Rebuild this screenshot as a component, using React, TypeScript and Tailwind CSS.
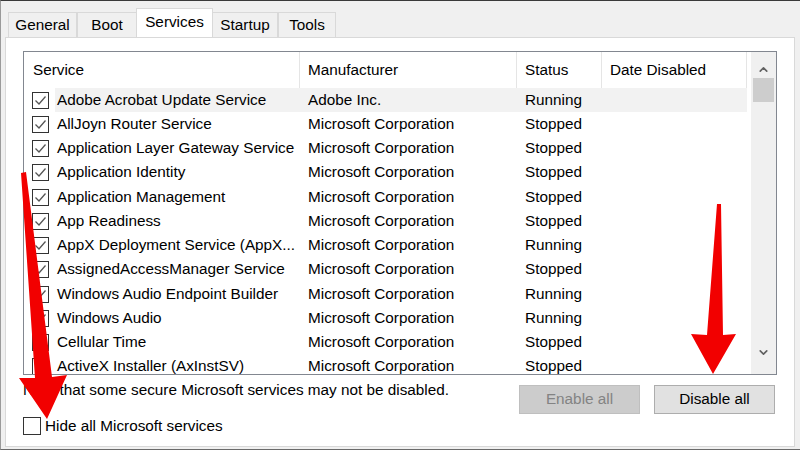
import { ChevronUp, ChevronDown } from 'lucide-react';

type Row = { name: string; maker: string; status: string };

const rows: Row[] = [
  { name: 'Adobe Acrobat Update Service', maker: 'Adobe Inc.', status: 'Running' },
  { name: 'AllJoyn Router Service', maker: 'Microsoft Corporation', status: 'Stopped' },
  { name: 'Application Layer Gateway Service', maker: 'Microsoft Corporation', status: 'Stopped' },
  { name: 'Application Identity', maker: 'Microsoft Corporation', status: 'Stopped' },
  { name: 'Application Management', maker: 'Microsoft Corporation', status: 'Stopped' },
  { name: 'App Readiness', maker: 'Microsoft Corporation', status: 'Stopped' },
  { name: 'AppX Deployment Service (AppX...', maker: 'Microsoft Corporation', status: 'Running' },
  { name: 'AssignedAccessManager Service', maker: 'Microsoft Corporation', status: 'Stopped' },
  { name: 'Windows Audio Endpoint Builder', maker: 'Microsoft Corporation', status: 'Running' },
  { name: 'Windows Audio', maker: 'Microsoft Corporation', status: 'Running' },
  { name: 'Cellular Time', maker: 'Microsoft Corporation', status: 'Stopped' },
  { name: 'ActiveX Installer (AxInstSV)', maker: 'Microsoft Corporation', status: 'Stopped' },
];

const tabs = [
  { label: 'General', w: 'w-[69px]' },
  { label: 'Boot', w: 'w-[60px]' },
  { label: 'Services', w: 'w-[77px]', active: true },
  { label: 'Startup', w: 'w-[66px]' },
  { label: 'Tools', w: 'w-[58px]' },
];

function CheckBox({ checked }: { checked: boolean }) {
  return (
    <div className="w-[17px] h-[17px] border border-[#333] bg-white flex items-center justify-center shrink-0">
      {checked && (
        <svg width="13" height="11" viewBox="0 0 13 11">
          <path d="M1.5 5.5 L5 9 L11.5 1.5" fill="none" stroke="#555" strokeWidth="1.3" />
        </svg>
      )}
    </div>
  );
}

function Arrows() {
  return (
    <svg className="absolute inset-0 pointer-events-none" width="800" height="450" viewBox="0 0 800 450">
      <defs>
        <filter id="soft" x="-20%" y="-20%" width="140%" height="140%">
          <feGaussianBlur stdDeviation="0.7" />
        </filter>
      </defs>
      <g fill="#f20000" filter="url(#soft)">
        <polygon points="20,172 25,171 51,376 66,374 46,418 18,377 34,377" />
        <polygon points="716,203 720,203 722,334 735,333 712,373 690,333 706,334" />
      </g>
    </svg>
  );
}

export default function App() {
  return (
    <div className="relative w-[800px] h-[450px] overflow-hidden bg-[#f0f0f0] border-t border-[#3a3a3a] border-l border-l-[#9a9a9a] border-b border-b-[#6a6a6a] text-[15.3px] text-black font-['Liberation_Sans',sans-serif]">
      <div className="flex items-end h-[36px] pl-[7px]">
        {tabs.map(t =>
          t.active ? (
            <div
              key={t.label}
              className={`${t.w} h-[29px] -mx-[1px] z-10 bg-white border border-b-0 border-[#d9d9d9] flex items-start justify-center pt-[2px]`}
            >
              {t.label}
            </div>
          ) : (
            <div
              key={t.label}
              className={`${t.w} h-[25px] bg-[#f0f0f0] border border-b-0 border-[#d9d9d9] flex items-center justify-center`}
            >
              {t.label}
            </div>
          )
        )}
      </div>

      <div className="ml-[4px] w-[790px] h-[410px] bg-white border border-[#d9d9d9] pl-[17px] pt-[13px]">
        <div className="w-[754px] h-[324px] border border-[#828790] flex overflow-hidden">
          <div className="w-[727px]">
            <div className="flex h-[36px] items-center">
              <div className="w-[276px] h-full border-r border-[#e5e5e5] pl-[9px] pt-[1px] flex items-center">Service</div>
              <div className="w-[217px] h-full border-r border-[#e5e5e5] pl-[8px] pt-[1px] flex items-center">Manufacturer</div>
              <div className="w-[85px] h-full border-r border-[#e5e5e5] pl-[8px] pt-[1px] flex items-center">Status</div>
              <div className="w-[145px] h-full border-r border-[#e5e5e5] pl-[8px] pt-[1px] flex items-center">Date Disabled</div>
            </div>
            {rows.map((r, i) => (
              <div key={r.name} className="flex h-[24.25px] items-center">
                <div className="w-[31px] pl-[8px] flex items-center">
                  <CheckBox checked />
                </div>
                <div className={`flex h-full items-center ${i === 0 ? 'bg-[#f2f2f2]' : ''}`}>
                  <div className="w-[245px] pl-[2px] whitespace-nowrap">{r.name}</div>
                  <div className="w-[217px] pl-[8px] whitespace-nowrap">{r.maker}</div>
                  <div className="w-[85px] pl-[8px]">{r.status}</div>
                  <div className="w-[145px]" />
                </div>
              </div>
            ))}
          </div>
          <div className="w-[25px] h-full bg-[#f0f0f0] flex flex-col items-center">
            <div className="h-[26px] flex items-center justify-center pt-[8px]">
              <ChevronUp size={13} strokeWidth={3} color="#606060" />
            </div>
            <div className="w-[21px] h-[24px] bg-[#cdcdcd]" />
            <div className="flex-1" />
            <div className="h-[30px] flex items-start justify-center pt-[2px]">
              <ChevronDown size={13} strokeWidth={3} color="#606060" />
            </div>
          </div>
        </div>

        <div className="w-[754px] flex justify-between">
          <div className="pt-[5px]">
            <div className="h-[20px] leading-[20px]">Note that some secure Microsoft services may not be disabled.</div>
            <div className="flex items-center mt-[15px]">
              <div className="w-[18px] h-[18px] border border-[#333] bg-white" />
              <span className="ml-[4px]">Hide all Microsoft services</span>
            </div>
          </div>
          <div className="flex gap-[14px] pt-[10px] pr-[2px] h-fit">
            <div className="w-[121px] h-[29px] bg-[#cccccc] border border-[#bfbfbf] text-[#838383] flex items-center justify-center">
              Enable all
            </div>
            <div className="w-[121px] h-[29px] bg-[#e1e1e1] border border-[#adadad] flex items-center justify-center">
              Disable all
            </div>
          </div>
        </div>
      </div>

      <Arrows />
    </div>
  );
}
